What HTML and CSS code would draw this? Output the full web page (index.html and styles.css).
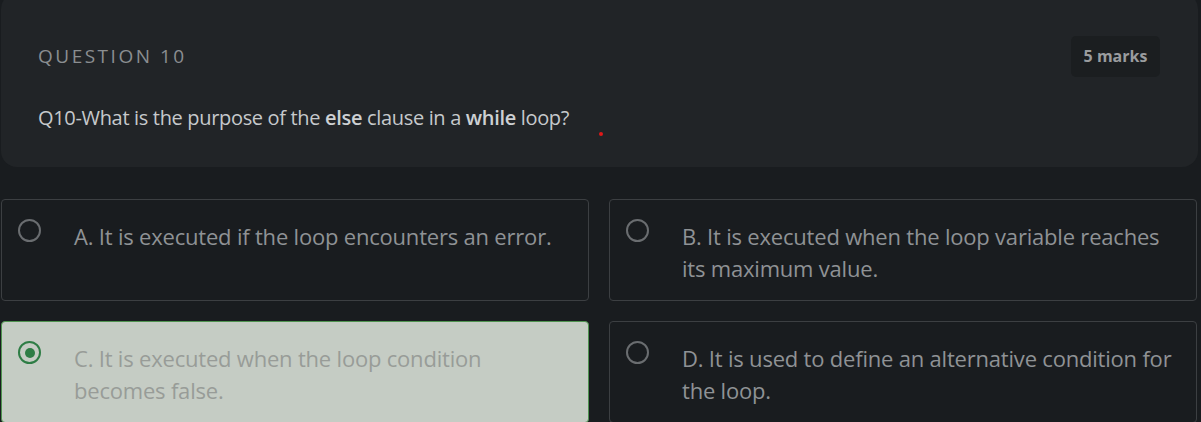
FILE: index.html
```html
<!DOCTYPE html>
<html lang="en">
<head>
<meta charset="utf-8">
<title>Question 10</title>
<link rel="stylesheet" href="styles.css">
</head>
<body>
<section class="qcard">
  <div class="qhead">
    <h2 class="qlabel">QUESTION 10</h2>
    <span class="marks">5 marks</span>
  </div>
  <p class="qtext">Q10-What is the purpose of the <b>else</b> clause in a <b>while</b> loop?<span class="dot"></span></p>
</section>
<div class="options">
  <label class="opt">
    <span class="radio"></span>
    <span class="otext">A. It is executed if the loop encounters an error.</span>
  </label>
  <label class="opt">
    <span class="radio"></span>
    <span class="otext">B. It is executed when the loop variable reaches its maximum value.</span>
  </label>
  <label class="opt selected">
    <span class="radio"><span class="radio-dot"></span></span>
    <span class="otext">C. It is executed when the loop condition becomes false.</span>
  </label>
  <label class="opt">
    <span class="radio"></span>
    <span class="otext">D. It is used to define an alternative condition for the loop.</span>
  </label>
</div>
</body>
</html>
```
FILE: styles.css
```css
html, body {
  margin: 0;
  padding: 0;
}
body {
  background: #191c1f;
  font-family: "Open Sans", Lato, sans-serif;
  overflow: hidden;
}
.qcard {
  margin: -7px 3px 0 1px;
  background: #212427;
  border-radius: 16px;
  padding: 42px 38px 35px 37px;
}
.qhead {
  display: flex;
  justify-content: space-between;
  align-items: center;
  height: 42px;
}
.qlabel {
  margin: 0;
  font-weight: 400;
  font-size: 19px;
  letter-spacing: 2.5px;
  color: #8b8e91;
}
.marks {
  background: #1b1e20;
  border-radius: 5px;
  height: 41px;
  width: 89px;
  display: flex;
  align-items: center;
  justify-content: center;
  font-size: 16px;
  font-weight: 700;
  color: #9a9c9e;
}
.qtext {
  margin: 27px 0 0;
  font-size: 20px;
  letter-spacing: -0.33px;
  line-height: 28px;
  color: #c6c9cc;
  position: relative;
}
.qtext b {
  font-weight: 600;
  color: #cdd0d3;
}
.dot {
  position: absolute;
  left: 561px;
  top: 28px;
  width: 4px;
  height: 4px;
  border-radius: 50%;
  background: #e01818;
}
.options {
  display: grid;
  grid-template-columns: 1fr 1fr;
  gap: 20px;
  margin: 32px 4px 0 1px;
}
.opt {
  display: flex;
  align-items: flex-start;
  gap: 33px;
  min-height: 102px;
  box-sizing: border-box;
  border: 1px solid #3c3f42;
  border-radius: 4px;
  padding: 20px 18px 14px 16px;
  background: #191c1f;
}
.radio {
  flex: none;
  width: 23px;
  height: 23px;
  margin-top: -1px;
  box-sizing: border-box;
  border: 2px solid #6a6d70;
  border-radius: 50%;
  display: flex;
  align-items: center;
  justify-content: center;
}
.otext {
  font-size: 22px;
  letter-spacing: -0.2px;
  line-height: 32px;
  color: #8f9295;
}
.selected {
  background: #c5ccc4;
  border-color: #4f9350;
}
.selected .radio {
  border-color: #2e7d45;
}
.radio-dot {
  width: 10px;
  height: 10px;
  border-radius: 50%;
  background: #2e7d45;
}
.selected .otext {
  color: #989c98;
}
```
